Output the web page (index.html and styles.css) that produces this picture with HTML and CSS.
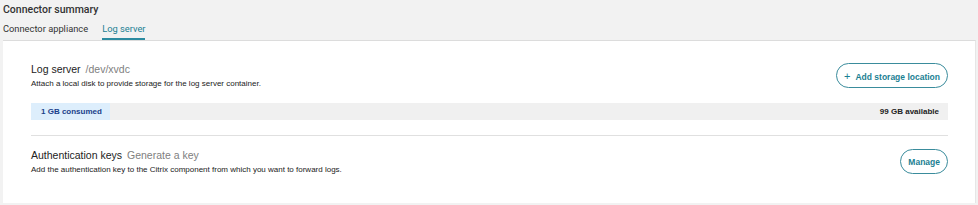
FILE: index.html
```html
<!DOCTYPE html>
<html lang="en">
<head>
    <meta charset="UTF-8">
    <title>Connector summary</title>
    <link rel="stylesheet" href="styles.css">
</head>
<body>
    <div class="page">
        <h2 class="page-title">Connector summary</h2>

        <nav class="tabs">
            <span class="tab">Connector appliance</span>
            <span class="tab active">Log server</span>
        </nav>

        <div class="panel">
            <section class="row">
                <div class="row-head">
                    <div class="row-text">
                        <h3 class="row-title">Log server <span class="row-sub">/dev/xvdc</span></h3>
                        <p class="row-desc">Attach a local disk to provide storage for the log server container.</p>
                    </div>
                    <button type="button" class="pill-btn">
                        <span class="plus">+</span> Add storage location
                    </button>
                </div>

                <div class="storage-bar">
                    <div class="consumed" style="width: 79px">1 GB consumed</div>
                    <div class="available">99 GB available</div>
                </div>
            </section>

            <section class="row last">
                <div class="row-head">
                    <div class="row-text">
                        <h3 class="row-title">Authentication keys <span class="row-sub">Generate a key</span></h3>
                        <p class="row-desc">Add the authentication key to the Citrix component from which you want to forward logs.</p>
                    </div>
                    <button type="button" class="pill-btn">Manage</button>
                </div>
            </section>
        </div>
    </div>
</body>
</html>
```

FILE: styles.css
```css
:root {
    --teal: #1b7f93;
    --text-primary: #1f1f1f;
    --text-secondary: #808080;
    --bg-page: #f2f2f2;
    --border-color: #dcdcdc;
}

* {
    margin: 0;
    padding: 0;
    box-sizing: border-box;
}

body {
    font-family: "Liberation Sans", Arial, sans-serif;
    color: var(--text-primary);
    background: var(--bg-page);
}

.page {
    padding: 3px 2px 2px 3px;
}

.page-title {
    font-family: Roboto, sans-serif;
    font-size: 10.5px;
    font-weight: 500;
    color: #333;
    line-height: 14px;
}

.tabs {
    display: flex;
    gap: 14px;
    margin-top: 5px;
    font-family: Roboto, sans-serif;
    font-size: 9.3px;
    color: #333;
}

.tab {
    padding: 0 0 2px;
    border-bottom: 2px solid transparent;
    line-height: 14px;
}

.tab.active {
    color: var(--teal);
    border-bottom-color: #2c8ba0;
}

.panel {
    background: #fff;
    border-top: 1px solid var(--border-color);
    border-right: 1px solid #e6e6e6;
    padding: 0 27px 0 28px;
    height: 163px;
}

.row {
    padding: 21px 0 15px;
    border-bottom: 1px solid #e0e0e0;
}

.row.last {
    border-bottom: none;
    padding-top: 12px;
}

.row-head {
    display: flex;
    justify-content: space-between;
    align-items: center;
}

.row-title {
    font-size: 10.5px;
    font-weight: 400;
    line-height: 14px;
    color: #222;
}

.row-sub {
    color: var(--text-secondary);
    margin-left: 2px;
}

.row-desc {
    font-size: 8px;
    line-height: 11px;
    margin-top: 2px;
    color: #222;
}

.pill-btn {
    font-family: "Liberation Sans", Arial, sans-serif;
    font-size: 8.5px;
    font-weight: 700;
    color: var(--teal);
    background: #fff;
    border: 1.5px solid #3a8c9c;
    border-radius: 13px;
    height: 25px;
    padding: 0 7px;
    cursor: pointer;
}

.plus {
    font-size: 11px;
    font-weight: 400;
    margin-right: 3px;
}

.storage-bar {
    display: flex;
    justify-content: space-between;
    align-items: center;
    background: #f0f0f0;
    height: 17px;
    margin-top: 14px;
    font-size: 8px;
    font-weight: 700;
}

.consumed {
    background: #ddeefc;
    color: #1a3f8a;
    height: 100%;
    display: flex;
    align-items: center;
    padding-left: 10px;
}

.available {
    padding-right: 9px;
    color: #222;
}
```
